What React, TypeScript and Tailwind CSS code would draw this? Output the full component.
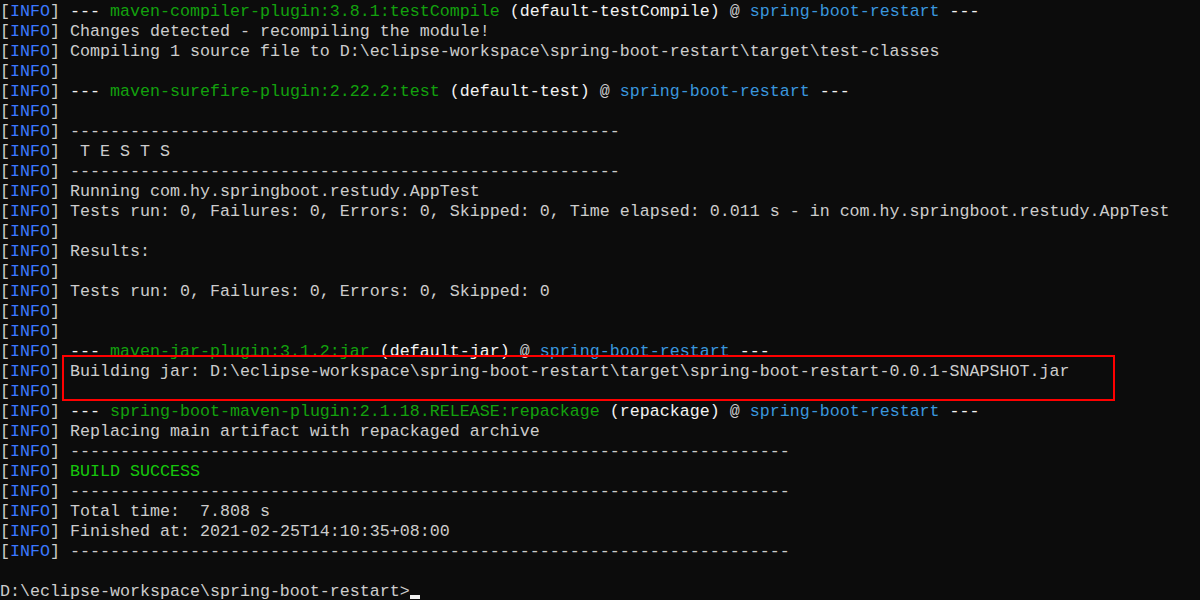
type Seg = [string, string];

const G = 'text-[#13a10e]';
const C = 'text-[#3a96dd]';
const W = 'text-[#f2f2f2]';
const D = 'text-[#cccccc]';
const OK = 'text-[#16c60c]';

const dash55 = '-'.repeat(55);
const dash72 = '-'.repeat(72);

function mojo(plugin: string, exec: string): Seg[] {
    return [
        [W, '--- '],
        [G, plugin],
        [D, ' '],
        [W, `(${exec})`],
        [D, ' @ '],
        [C, 'spring-boot-restart'],
        [W, ' ---'],
    ];
}

const lines: Seg[][] = [
    mojo('maven-compiler-plugin:3.8.1:testCompile', 'default-testCompile'),
    [[D, 'Changes detected - recompiling the module!']],
    [[D, 'Compiling 1 source file to D:\\eclipse-workspace\\spring-boot-restart\\target\\test-classes']],
    [],
    mojo('maven-surefire-plugin:2.22.2:test', 'default-test'),
    [],
    [[D, dash55]],
    [[D, ' T E S T S']],
    [[D, dash55]],
    [[D, 'Running com.hy.springboot.restudy.AppTest']],
    [[D, 'Tests run: 0, Failures: 0, Errors: 0, Skipped: 0, Time elapsed: 0.011 s - in com.hy.springboot.restudy.AppTest']],
    [],
    [[D, 'Results:']],
    [],
    [[D, 'Tests run: 0, Failures: 0, Errors: 0, Skipped: 0']],
    [],
    [],
    mojo('maven-jar-plugin:3.1.2:jar', 'default-jar'),
    [[D, 'Building jar: D:\\eclipse-workspace\\spring-boot-restart\\target\\spring-boot-restart-0.0.1-SNAPSHOT.jar']],
    [],
    mojo('spring-boot-maven-plugin:2.1.18.RELEASE:repackage', 'repackage'),
    [[D, 'Replacing main artifact with repackaged archive']],
    [[D, dash72]],
    [[OK, 'BUILD SUCCESS']],
    [[D, dash72]],
    [[D, 'Total time:  7.808 s']],
    [[D, 'Finished at: 2021-02-25T14:10:35+08:00']],
    [[D, dash72]],
];

export default function App() {
    return (
        <div
            className="relative w-[1200px] h-[600px] overflow-hidden bg-[#0c0c0c] text-[#cccccc] text-[16.667px] leading-[20px] whitespace-pre pt-[2px]"
            style={{ fontFamily: '"Liberation Mono", "DejaVu Sans Mono", monospace' }}
        >
            {lines.map((segs, i) => (
                <div key={i} className="h-[20px]">
                    <span className={D}>[</span>
                    <span className="text-[#3b78ff]">INFO</span>
                    <span className={D}>] </span>
                    {segs.map(([cls, txt], j) => (
                        <span key={j} className={cls}>
                            {txt}
                        </span>
                    ))}
                </div>
            ))}
            <div className="h-[20px]" />
            <div className="h-[20px] flex items-end">
                <span className="self-start">D:\eclipse-workspace\spring-boot-restart&gt;</span>
                <span className="inline-block w-[10px] h-[4px] bg-[#f2f2f2] mb-[3px]" />
            </div>

            {/* highlight box drawn over the jar line */}
            <div className="absolute left-[62px] top-[355px] w-[1053px] h-[46px] border-2 border-[#ff0000]" />
        </div>
    );
}
